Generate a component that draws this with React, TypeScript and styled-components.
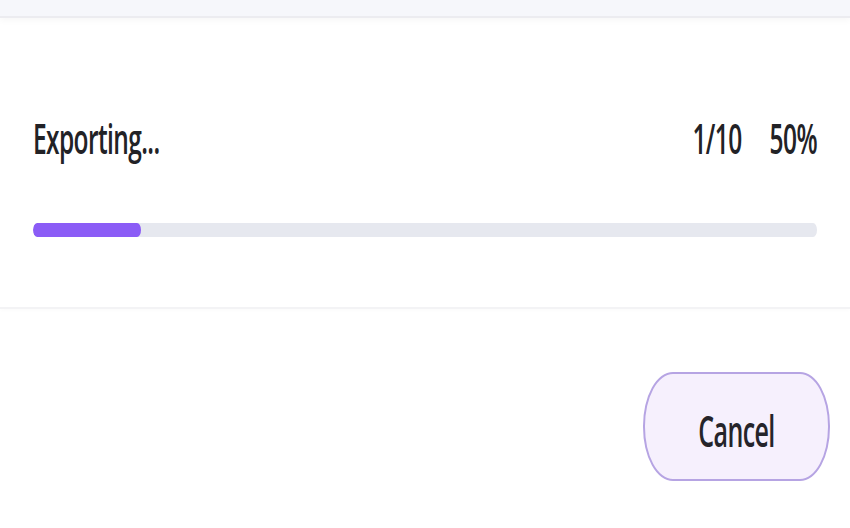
import React from "react";
import styled, { createGlobalStyle } from "styled-components";

const GlobalStyle = createGlobalStyle`
  body {
    margin: 0;
    padding: 0;
    background: #ffffff;
    font-family: "Open Sans", "Noto Sans", sans-serif;
    color: #222226;
  }
`;

// the capture is stretched on the y axis, so glyphs get a vertical stretch
const Stretch = styled.span`
  display: inline-block;
  transform: scaleY(1.72);
  transform-origin: center;
`;

const Page = styled.div`
  width: 850px;
  height: 528px;
  display: flex;
  flex-direction: column;
  overflow: hidden;
`;

const TopBar = styled.div`
  height: 16px;
  flex-shrink: 0;
  background: #f6f7fb;
  border-bottom: 2px solid #ececf0;
  box-shadow: 0 3px 6px rgba(0, 0, 0, 0.03);
`;

const ProgressSection = styled.section`
  padding: 105px 33px 70px;
  border-bottom: 2px solid #f3f3f5;
  box-shadow: 0 2px 4px rgba(0, 0, 0, 0.015);
`;

const StatusRow = styled.div`
  display: flex;
  justify-content: space-between;
  align-items: center;
  height: 32px;
  font-size: 24.5px;
  font-weight: 600;
  line-height: 32px;
  letter-spacing: -0.6px;
`;

const Counters = styled.div`
  display: flex;
  gap: 28px;
`;

const Track = styled.div`
  margin-top: 68px;
  height: 14px;
  border-radius: 4px / 7px;
  background: #e6e8ef;
  overflow: hidden;
`;

const Fill = styled.div`
  height: 100%;
  border-radius: 4px / 7px;
  background: #8b5cf6;
`;

const Footer = styled.footer`
  display: flex;
  justify-content: flex-end;
  padding: 63px 20px 0;
`;

const CancelButton = styled.button`
  width: 187px;
  height: 109px;
  padding: 6px 0 0;
  border-radius: 30px / 54px;
  border: 2px solid #b6a4e3;
  background: #f6f0fd;
  font-family: "Open Sans", "Noto Sans", sans-serif;
  font-size: 25px;
  font-weight: 600;
  line-height: 32px;
  color: #25242a;
  letter-spacing: -0.6px;
  cursor: pointer;
  display: flex;
  align-items: center;
  justify-content: center;
`;

export default function App() {
  const fill = 13.8;
  return (
    <>
      <GlobalStyle />
      <Page>
        <TopBar />
        <ProgressSection>
          <StatusRow>
            <Stretch>Exporting...</Stretch>
            <Counters>
              <Stretch>1/10</Stretch>
              <Stretch>50%</Stretch>
            </Counters>
          </StatusRow>
          <Track>
            <Fill style={{ width: `${fill}%` }} />
          </Track>
        </ProgressSection>
        <Footer>
          <CancelButton>
            <Stretch>Cancel</Stretch>
          </CancelButton>
        </Footer>
      </Page>
    </>
  );
}
